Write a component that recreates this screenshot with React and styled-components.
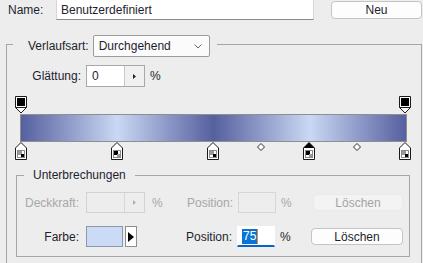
import React from "react";
import styled, { createGlobalStyle } from "styled-components";

const Global = createGlobalStyle`
  html, body { margin: 0; padding: 0; background: #ededed; }
  body {
    font-family: "Liberation Sans", Arial, sans-serif;
    font-size: 12px;
    color: #1e1e30;
  }
`;

const Dialog = styled.div`
  width: 423px;
  height: 263px;
  overflow: hidden;
  background: #ededed;
  display: flex;
  flex-direction: column;
`;

const NameRow = styled.div`
  display: flex;
  align-items: flex-start;
  height: 20px;
`;

const NameLabel = styled.span`
  width: 48px;
  padding-left: 8px;
  line-height: 20px;
`;

const NameInput = styled.div`
  width: 258px;
  height: 22px;
  margin-top: -2px;
  box-sizing: border-box;
  background: #fff;
  border: 1px solid #d6d6d6;
  border-bottom-color: #8a8a8a;
  padding-left: 4px;
  line-height: 22px;
`;

const Button = styled.div`
  box-sizing: border-box;
  width: ${({ w }) => w}px;
  height: ${({ h }) => h || 17}px;
  margin-top: ${({ mt }) => mt || 0}px;
  margin-left: ${({ ml }) => ml || 0}px;
  border: 1px solid ${({ disabled }) => (disabled ? "#e9e9e9" : "#c4c4c4")};
  border-radius: 4px;
  background: ${({ disabled }) => (disabled ? "#f3f3f3" : "#fdfdfd")};
  color: ${({ disabled }) => (disabled ? "#a4a4a4" : "inherit")};
  display: flex;
  align-items: center;
  justify-content: center;
`;

const Group = styled.div`
  box-sizing: border-box;
  border: 1px solid #a6a6a6;
  display: flex;
  flex-direction: column;
`;

const OuterGroup = styled(Group)`
  margin: 24px 0 0 6px;
  width: 416px;
  flex: 1 0 auto;
  border-bottom: none;
`;

const InnerGroup = styled(Group)`
  margin: 14px 0 0 9px;
  width: 394px;
  height: 82px;
`;

const Legend = styled.div`
  align-self: flex-start;
  display: flex;
  align-items: center;
  background: #ededed;
`;

const OuterLegend = styled(Legend)`
  margin: -10px 0 0 6px;
  padding: 0 7px 0 15px;
  height: 22px;
  gap: 4px;
`;

const InnerLegend = styled(Legend)`
  margin: -8px 0 0 7px;
  padding: 0 9px;
  height: 14px;
`;

const Select = styled.div`
  box-sizing: border-box;
  width: 117px;
  height: 22px;
  background: #fbfbfb;
  border: 1px solid #9c9c9c;
  border-radius: 2px;
  display: flex;
  align-items: center;
  justify-content: space-between;
  padding: 0 7px 0 5px;
`;

const Row = styled.div`
  display: flex;
  align-items: center;
  height: ${({ h }) => h || 22}px;
  margin-top: ${({ mt }) => mt || 0}px;
`;

const Label = styled.span`
  width: ${({ w }) => w}px;
  margin-right: ${({ gap }) => gap}px;
  text-align: right;
  white-space: nowrap;
  color: ${({ disabled }) => (disabled ? "#a8a8a8" : "inherit")};
`;

const Unit = styled.span`
  width: ${({ w }) => w}px;
  padding-left: ${({ pl }) => pl || 0}px;
  box-sizing: border-box;
  color: ${({ disabled }) => (disabled ? "#a8a8a8" : "inherit")};
`;

const Spinner = styled.div`
  box-sizing: border-box;
  width: 59px;
  height: ${({ h }) => h}px;
  display: flex;
  border: 1px solid ${({ disabled }) => (disabled ? "#d2d2d2" : "#a9a9a9")};
  background: ${({ disabled }) => (disabled ? "#ededed" : "#fff")};
`;

const SpinValue = styled.div`
  flex: 1;
  padding-left: 5px;
  display: flex;
  align-items: center;
`;

const SpinArrow = styled.div`
  width: 19px;
  border-left: 1px solid ${({ disabled }) => (disabled ? "#d8d8d8" : "#c8c8c8")};
  background: ${({ disabled }) => (disabled ? "#ededed" : "#f0f0f0")};
  display: flex;
  align-items: center;
  justify-content: center;
`;

const TextBox = styled.div`
  box-sizing: border-box;
  width: 38px;
  height: 21px;
  border: 1px solid ${({ disabled }) => (disabled ? "#d6d6d6" : "transparent")};
  border-bottom: ${({ active }) => (active ? "2px solid #0a63c9" : undefined)};
  background: ${({ active }) => (active ? "#fff" : "#ededed")};
  display: flex;
  align-items: center;
  padding-left: 4px;
`;

const Selected = styled.span`
  background: #0a74d6;
  color: #fff;
  line-height: 15px;
  padding: 0 1px;
  border-right: 1px solid #f08a24;
`;

const ColorPick = styled.div`
  width: 59px;
  height: 21px;
  display: flex;
  gap: 2px;
`;

const Swatch = styled.div`
  box-sizing: border-box;
  width: 37px;
  height: 21px;
  background: #cbdaf5;
  border: 1px solid #8d98ac;
`;

const PickArrow = styled.div`
  box-sizing: border-box;
  width: 12px;
  height: 21px;
  border: 1px solid #8e8e8e;
  background: #fff;
  display: flex;
  align-items: center;
  justify-content: center;
`;

const GradientArea = styled.div`
  margin: 9px 0 0 13px;
  width: 387px;
  display: flex;
  flex-direction: column;
`;

const Track = styled.div`
  position: relative;
  height: ${({ h }) => h}px;
`;

const Bar = styled.div`
  box-sizing: border-box;
  height: 28px;
  border: 1px solid #8f8f8f;
  background: linear-gradient(
    to right,
    #55609f 0%,
    #c9d8f3 25%,
    #55609f 50%,
    #c9d8f3 75%,
    #55609f 100%
  );
`;

const Marker = styled.div`
  position: absolute;
  top: ${({ top }) => top || 0}px;
  transform: translateX(-50%);
  display: flex;
`;

const pos = (p) => ({ left: `${1 + p * 384}px` });

const OpacityStop = () => (
  <svg width="12" height="18" viewBox="0 0 12 18">
    <path d="M0.5 0.5H11.5V11.5L6 17 0.5 11.5Z" fill="#fff" stroke="#1a1a1a" />
    <rect x="2" y="2" width="8" height="8" fill="#000" />
    <path d="M0.5 11.5H11.5" stroke="#1a1a1a" />
  </svg>
);

const ColorStop = ({ fg, selected }) => (
  <svg width="12" height="18" viewBox="0 0 12 18">
    <path
      d="M6 0.5L11.5 6V17.5H0.5V6Z"
      fill="#fff"
      stroke="#1a1a1a"
    />
    {selected && <path d="M6 0.5L11.5 6H0.5Z" fill="#000" />}
    <rect x="2.5" y="8.5" width="7" height="7" fill="#fff" stroke="#8a8a8a" />
    <rect x="3" y="9" width="4" height="4" fill={fg ? "#000" : "#9a9a9a"} />
    <rect x="6" y="12" width="3" height="3" fill={fg ? "#9a9a9a" : "#000"} />
  </svg>
);

const Midpoint = () => (
  <svg width="8" height="8" viewBox="0 0 8 8">
    <path d="M4 0.5L7.5 4 4 7.5 0.5 4Z" fill="#fff" stroke="#2a2a2a" />
  </svg>
);

const colorStops = [
  { p: 0, fg: false },
  { p: 0.25, fg: true },
  { p: 0.5, fg: false },
  { p: 0.75, fg: true, selected: true },
  { p: 1, fg: false },
];

export default function App() {
  return (
    <Dialog>
      <Global />
      <NameRow>
        <NameLabel>Name:</NameLabel>
        <NameInput>Benutzerdefiniert</NameInput>
        <Button w={91} h={18} mt={1} ml={17}>Neu</Button>
      </NameRow>

      <OuterGroup>
        <OuterLegend>
          <span>Verlaufsart:</span>
          <Select>
            <span>Durchgehend</span>
            <svg width="8" height="5" viewBox="0 0 8 5">
              <path d="M0.5 0.5L4 4 7.5 0.5" fill="none" stroke="#666" />
            </svg>
          </Select>
        </OuterLegend>

        <Row mt={8}>
          <Label w={74} gap={5}>Glättung:</Label>
          <Spinner h={22}>
            <SpinValue>0</SpinValue>
            <SpinArrow>
              <svg width="3" height="5" viewBox="0 0 3 5">
                <path d="M0 0L3 2.5 0 5Z" fill="#222" />
              </svg>
            </SpinArrow>
          </Spinner>
          <Unit w={30} pl={5}>%</Unit>
        </Row>

        <GradientArea>
          <Track h={18}>
            <Marker style={pos(0)}><OpacityStop /></Marker>
            <Marker style={pos(1)}><OpacityStop /></Marker>
          </Track>
          <Bar />
          <Track h={19}>
            {colorStops.map((s) => (
              <Marker key={s.p} style={pos(s.p)}>
                <ColorStop fg={s.fg} selected={s.selected} />
              </Marker>
            ))}
            <Marker top={1} style={pos(0.625)}><Midpoint /></Marker>
            <Marker top={1} style={pos(0.875)}><Midpoint /></Marker>
          </Track>
        </GradientArea>

        <InnerGroup>
          <InnerLegend>Unterbrechungen</InnerLegend>
          <Row h={21} mt={10}>
            <Label w={62} gap={7} disabled>Deckkraft:</Label>
            <Spinner h={21} disabled>
              <SpinValue />
              <SpinArrow disabled>
                <svg width="3" height="5" viewBox="0 0 3 5">
                  <path d="M0 0L3 2.5 0 5Z" fill="#b0b0b0" />
                </svg>
              </SpinArrow>
            </Spinner>
            <Unit w={40} pl={7} disabled>%</Unit>
            <Label w={48} gap={5} disabled>Position:</Label>
            <TextBox disabled />
            <Unit w={37} pl={5} disabled>%</Unit>
            <Button w={90} disabled>Löschen</Button>
          </Row>
          <Row h={21} mt={13}>
            <Label w={62} gap={7}>Farbe:</Label>
            <ColorPick>
              <Swatch />
              <PickArrow>
                <svg width="6" height="10" viewBox="0 0 6 10">
                  <path d="M0 0L6 5 0 10Z" fill="#000" />
                </svg>
              </PickArrow>
            </ColorPick>
            <Unit w={40} />
            <Label w={47} gap={5}>Position:</Label>
            <TextBox active>
              <Selected>75</Selected>
            </TextBox>
            <Unit w={36} pl={5}>%</Unit>
            <Button w={92}>Löschen</Button>
          </Row>
        </InnerGroup>
      </OuterGroup>
    </Dialog>
  );
}
